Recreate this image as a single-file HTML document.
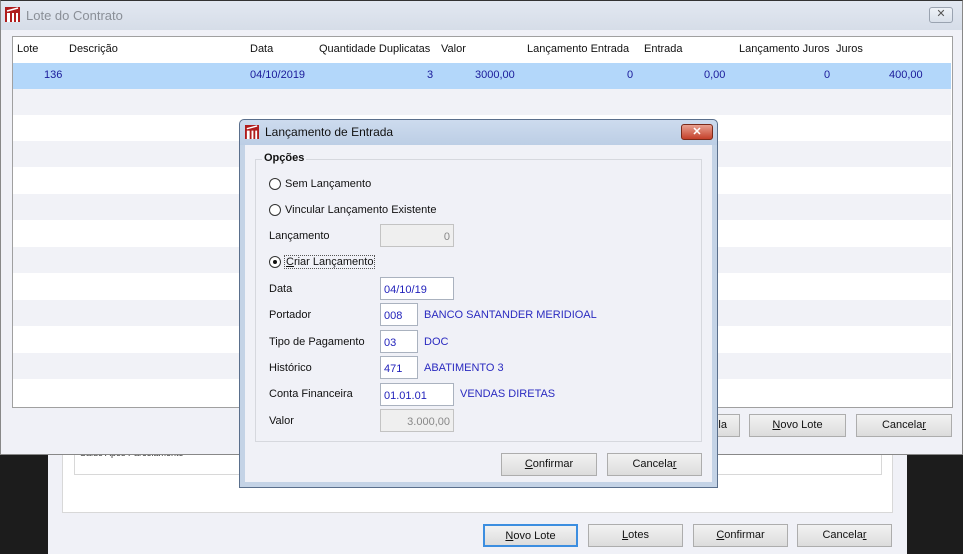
<!DOCTYPE html>
<html><head><meta charset="utf-8"><style>
*{box-sizing:border-box;margin:0;padding:0}
body{width:963px;height:554px;position:relative;overflow:hidden;background:#1c1c1c;font-family:"Liberation Sans",sans-serif;font-size:11px;color:#111}
.a{position:absolute}
.btn{position:absolute;height:23px;background:linear-gradient(#f2f2f2,#dcdcdc);border:1px solid #adadad;text-align:center;line-height:21px;font-size:11px;color:#111}
.btn u{text-decoration:underline}
.in{position:absolute;height:23px;background:#fff;border:1px solid #aab2bf;color:#2222bb;padding:5px 3px 0;font-size:11px;line-height:15px}
.dis{background:#efefef;color:#888;text-align:right;border-color:#c3c3c3}
.lbl{position:absolute;left:269px;font-size:11px;color:#111}
.blue{position:absolute;color:#2a2ac0;font-size:11px}
.row{position:absolute;left:13px;width:938px;height:26px}
.c{position:absolute;top:0;height:25px;line-height:25px;font-size:11px}
.rad{position:absolute;width:12px;height:12px;border:1px solid #333;border-radius:50%;background:#fff}
</style></head><body>
<div class="a" style="left:48px;top:440px;width:859px;height:114px;background:#f0f1f7"></div>
<div class="a" style="left:62px;top:445px;width:831px;height:68px;background:#fff;border:1px solid #d8d8d8"></div>
<div class="a" style="left:74px;top:445px;width:808px;height:30px;background:#fff;border:1px solid #d8d8d8"></div>
<div class="a" style="left:80px;top:448px;font-size:9px;color:#333">Saldo Apos Parcelamento</div>
<div class="btn" style="left:483px;top:524px;width:95px;border:2px solid #3c8ee0"><u>N</u>ovo Lote</div>
<div class="btn" style="left:588px;top:524px;width:95px"><u>L</u>otes</div>
<div class="btn" style="left:693px;top:524px;width:95px"><u>C</u>onfirmar</div>
<div class="btn" style="left:797px;top:524px;width:95px">Cancela<u>r</u></div>

<div class="a" style="left:0;top:0;width:963px;height:455px;background:#f0f1f7;border:1px solid #888;border-top-color:#333"></div>
<div class="a" style="left:1px;top:1px;width:961px;height:29px;background:linear-gradient(#e2e8f1,#d6dde8)"></div>
<svg class="a" style="left:5px;top:7px" width="15" height="15" viewBox="0 0 15 15"><rect x="0" y="0" width="15" height="15" fill="#b01c1c"/><rect x="2" y="6" width="3" height="9" fill="#fff"/><rect x="7" y="6" width="2" height="9" fill="#fff"/><rect x="11" y="6" width="2" height="9" fill="#fff"/><path d="M2 4 L13 1" stroke="#fff" stroke-width="1.5"/></svg>
<div class="a" style="left:26px;top:8px;font-size:13px;color:#8a8f97">Lote do Contrato</div>
<div class="a" style="left:929px;top:7px;width:24px;height:16px;border:1px solid #9aa3b0;border-radius:3px;background:linear-gradient(#eef2f7,#d9e0ea);text-align:center;font-size:11px;line-height:13px;color:#555">✕</div>

<div class="a" style="left:12px;top:36px;width:941px;height:372px;background:#fff;border:1px solid #a0a0a0"></div>
<div class="row" style="top:37px;height:25px;background:#fff">
<div class="c" style="left:4px">Lote</div><div class="c" style="left:56px">Descrição</div><div class="c" style="left:237px">Data</div><div class="c" style="left:306px">Quantidade Duplicatas</div><div class="c" style="left:428px">Valor</div><div class="c" style="left:514px">Lançamento Entrada</div><div class="c" style="left:631px">Entrada</div><div class="c" style="left:726px">Lançamento Juros</div><div class="c" style="left:823px">Juros</div>
</div>
<div class="row" style="top:63px;background:#b3d7fa;color:#1a1a9a">
<div class="c" style="left:31px">136</div><div class="c" style="left:237px">04/10/2019</div><div class="c" style="left:414px">3</div><div class="c" style="left:462px">3000,00</div><div class="c" style="left:614px">0</div><div class="c" style="left:691px">0,00</div><div class="c" style="left:811px">0</div><div class="c" style="left:876px">400,00</div>
</div>
<div class="row" style="top:89px;background:#f1f2f7"></div>
<div class="row" style="top:141px;background:#f1f2f7"></div>
<div class="row" style="top:194px;background:#f1f2f7"></div>
<div class="row" style="top:247px;background:#f1f2f7"></div>
<div class="row" style="top:300px;background:#f1f2f7"></div>
<div class="row" style="top:353px;background:#f1f2f7"></div>
<div class="btn" style="left:640px;top:414px;width:100px;text-align:right;padding-right:12px">Gerar Parcela</div>
<div class="btn" style="left:749px;top:414px;width:97px"><u>N</u>ovo Lote</div>
<div class="btn" style="left:856px;top:414px;width:96px">Cancela<u>r</u></div>

<div class="a" style="left:239px;top:119px;width:479px;height:369px;background:#c4d3e6;border:1px solid #5a6f8c;border-radius:5px 5px 0 0"></div>
<div class="a" style="left:240px;top:120px;width:477px;height:25px;background:linear-gradient(#cddbee,#bccee5);border-radius:5px 5px 0 0"></div>
<svg class="a" style="left:245px;top:125px" width="14" height="14" viewBox="0 0 15 15"><rect x="0" y="0" width="15" height="15" fill="#b01c1c"/><rect x="2" y="6" width="3" height="9" fill="#fff"/><rect x="7" y="6" width="2" height="9" fill="#fff"/><rect x="11" y="6" width="2" height="9" fill="#fff"/><path d="M2 4 L13 1" stroke="#fff" stroke-width="1.5"/></svg>
<div class="a" style="left:265px;top:125px;font-size:12px;color:#111">Lançamento de Entrada</div>
<div class="a" style="left:681px;top:124px;width:32px;height:16px;border:1px solid #7a2a1a;border-radius:3px;background:linear-gradient(#e8a090,#c4402a);text-align:center;color:#fff;font-weight:bold;font-size:11px;line-height:14px">✕</div>
<div class="a" style="left:245px;top:145px;width:467px;height:337px;background:#f0f1f7"></div>
<div class="a" style="left:255px;top:159px;width:447px;height:283px;border:1px solid #d6d8de"></div>
<div class="a" style="left:262px;top:152px;background:#f0f1f7;padding:0 2px;font-weight:bold;font-size:11px">Opções</div>
<div class="rad" style="left:269px;top:178px"></div><div class="a" style="left:285px;top:178px">Sem Lançamento</div>
<div class="rad" style="left:269px;top:204px"></div><div class="a" style="left:285px;top:204px">Vincular Lançamento Existente</div>
<div class="lbl" style="top:230px">Lançamento</div>
<div class="in dis" style="left:380px;top:224px;width:74px">0</div>
<div class="rad" style="left:269px;top:256px"></div><div class="a" style="left:273px;top:260px;width:4px;height:4px;background:#111;border-radius:50%"></div>
<div class="a" style="left:284px;top:255px;border:1px dotted #555;padding:0 1px"><u>C</u>riar Lançamento</div>
<div class="lbl" style="top:283px">Data</div><div class="in" style="left:380px;top:277px;width:74px">04/10/19</div>
<div class="lbl" style="top:309px">Portador</div><div class="in" style="left:380px;top:303px;width:38px">008</div><div class="blue" style="left:424px;top:309px">BANCO SANTANDER MERIDIOAL</div>
<div class="lbl" style="top:336px">Tipo de Pagamento</div><div class="in" style="left:380px;top:330px;width:38px">03</div><div class="blue" style="left:424px;top:336px">DOC</div>
<div class="lbl" style="top:362px">Histórico</div><div class="in" style="left:380px;top:356px;width:38px">471</div><div class="blue" style="left:424px;top:362px">ABATIMENTO 3</div>
<div class="lbl" style="top:388px">Conta Financeira</div><div class="in" style="left:380px;top:383px;width:74px">01.01.01</div><div class="blue" style="left:460px;top:388px">VENDAS DIRETAS</div>
<div class="lbl" style="top:415px">Valor</div><div class="in dis" style="left:380px;top:409px;width:74px">3.000,00</div>
<div class="btn" style="left:501px;top:453px;width:96px"><u>C</u>onfirmar</div>
<div class="btn" style="left:607px;top:453px;width:95px">Cancela<u>r</u></div>
</body></html>
